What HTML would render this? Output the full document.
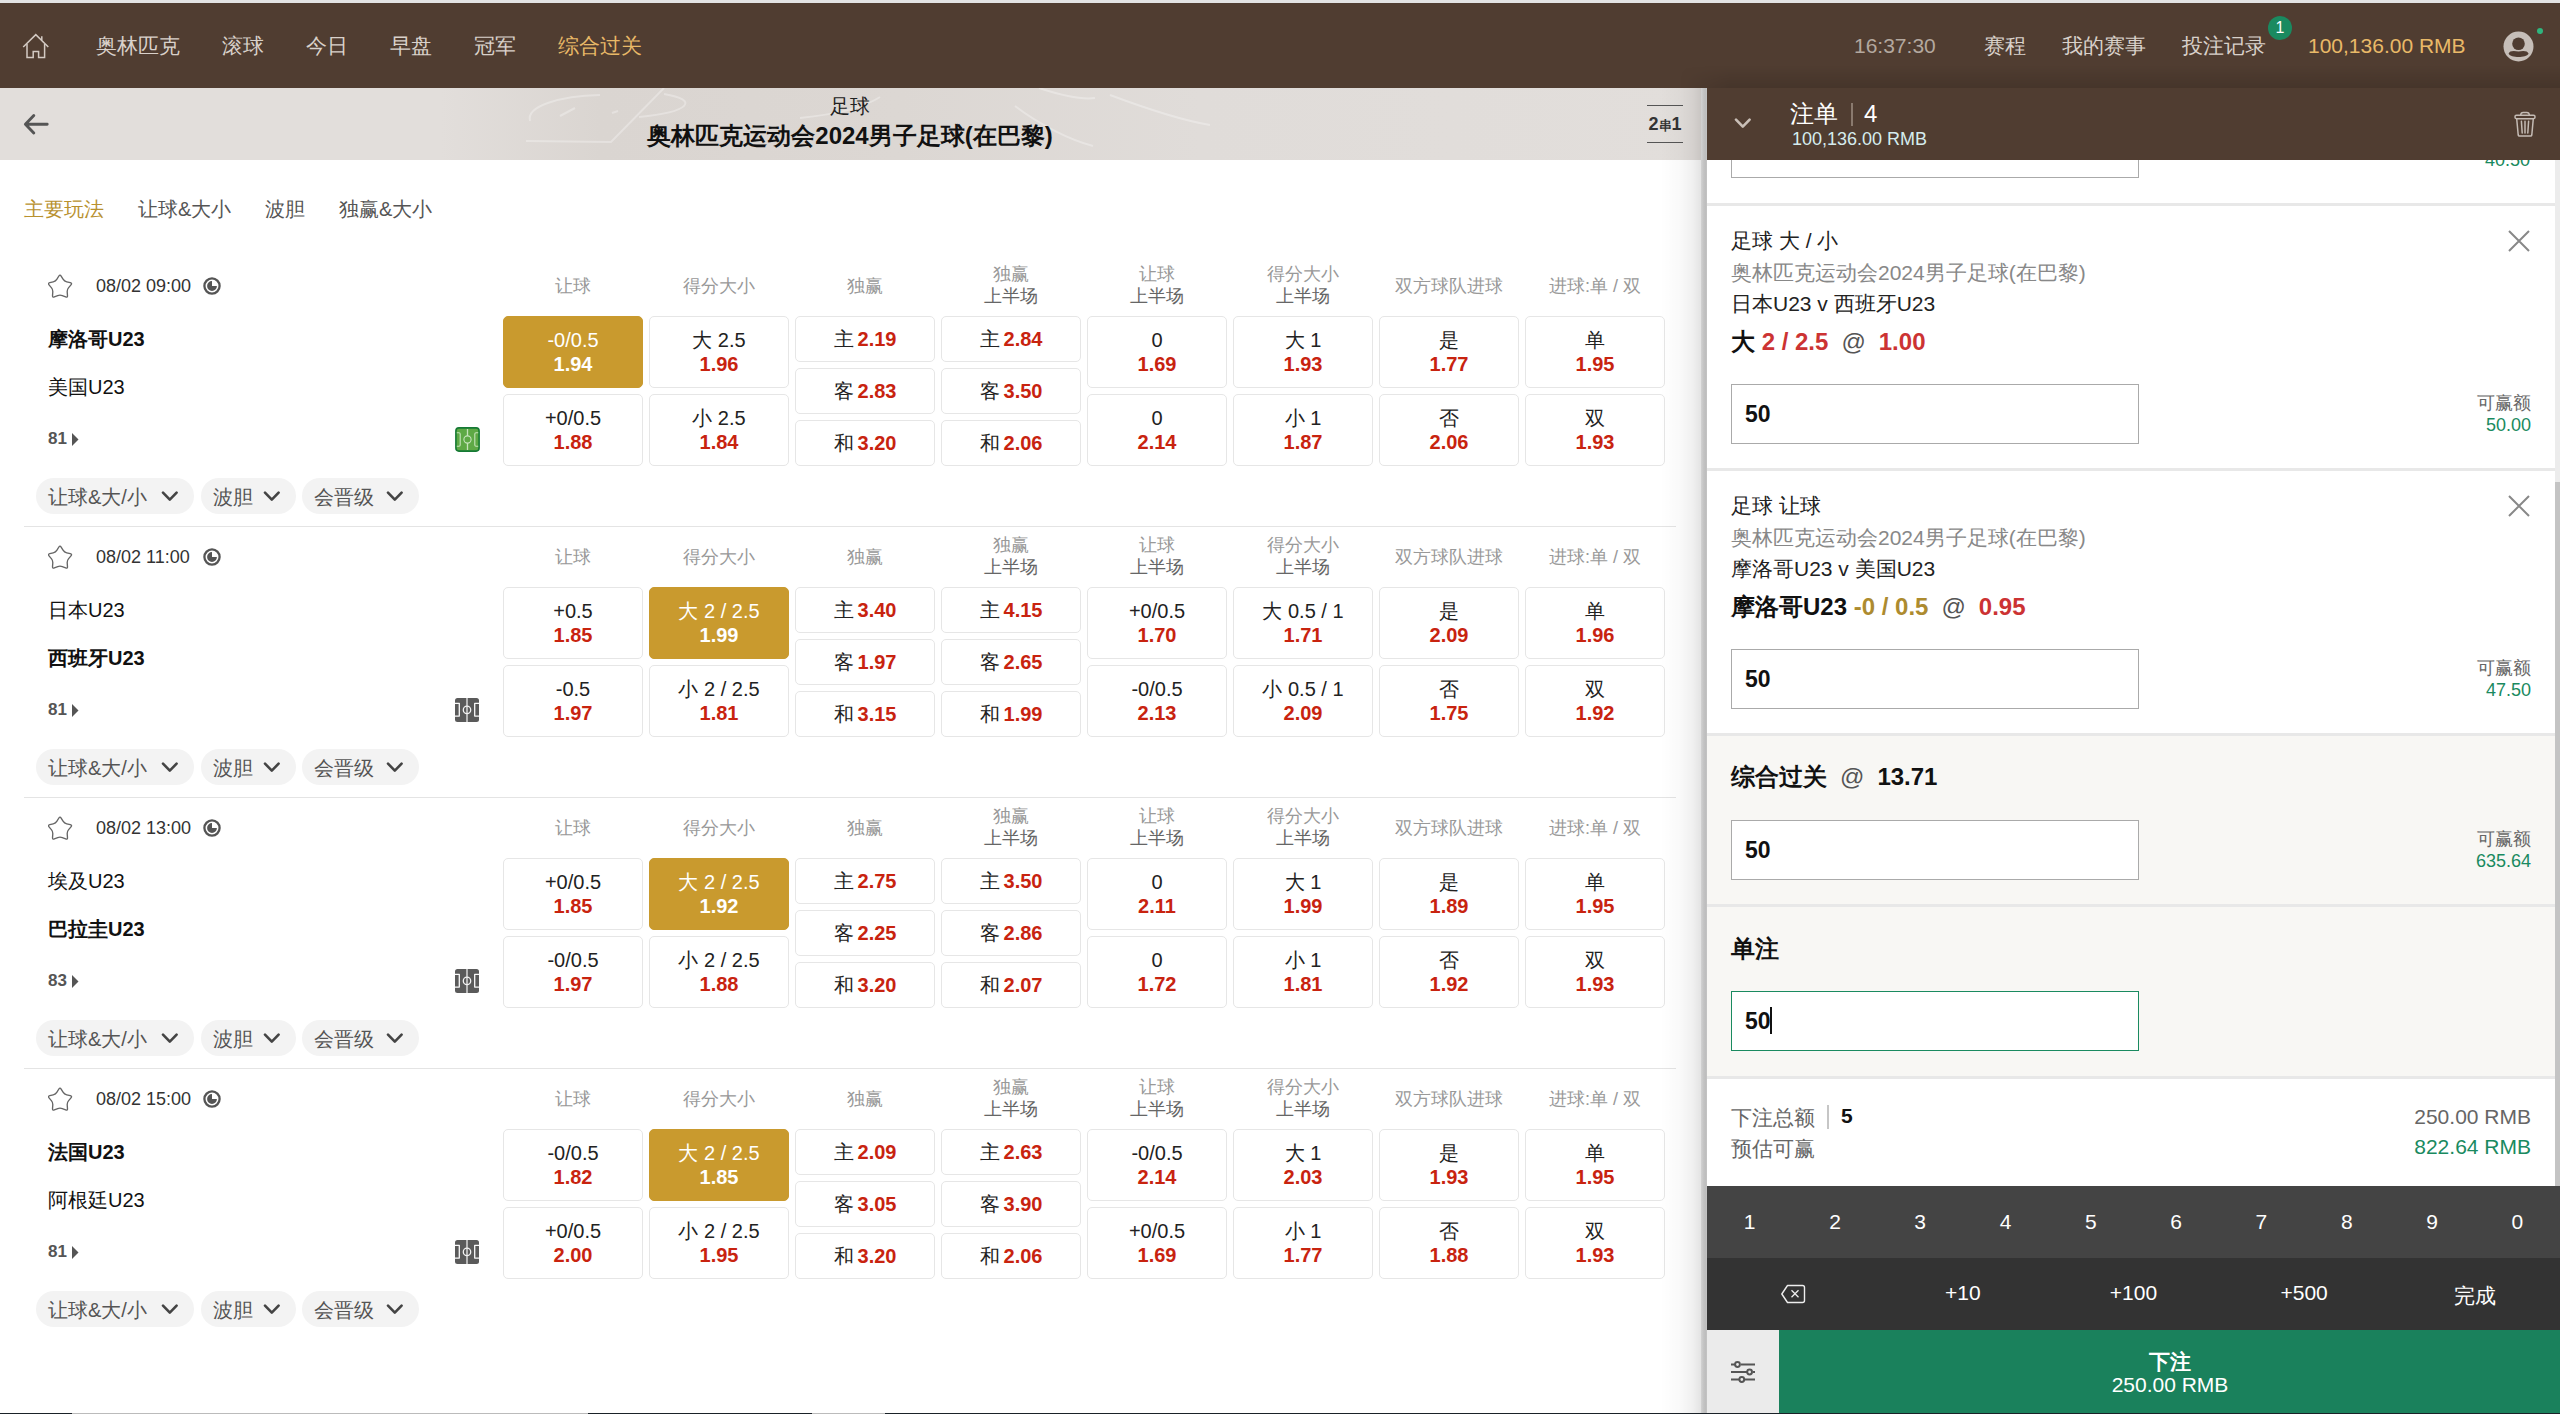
<!DOCTYPE html><html><head><meta charset="utf-8"><style>
*{box-sizing:border-box;margin:0;padding:0}
html,body{width:2560px;height:1414px;overflow:hidden;background:#fff;font-family:"Liberation Sans",sans-serif;color:#222}
.a{position:absolute;white-space:nowrap}
.nav{position:absolute;top:34px;font-size:21px;line-height:24px;color:#d9d1ca}
.colh{position:absolute;width:140px;text-align:center;font-size:18px;line-height:22px;color:#999}
.btn{position:absolute;width:140px;border:1px solid #e6e6e6;border-radius:5px;background:#fff;text-align:center;font-size:20px;color:#222}
.btn.sel{background:#c99a2e;border-color:#c99a2e;color:#fff}
.btn .o{color:#c8230f;font-weight:bold}
.btn.sel .o{color:#fff}
.pill{position:absolute;height:36px;border-radius:18px;background:#f3f3f3;font-size:20px;line-height:38px;color:#555;padding-left:12px}
.sep{position:absolute;left:24px;width:1652px;height:1px;background:#e4e4e4}
</style></head><body>
<div class="a" style="left:0;top:0;width:2560px;height:3px;background:#e3e3e3"></div>
<div class="a" style="left:0;top:3px;width:2560px;height:85px;background:#503d31"></div>
<svg class="a" style="left:22px;top:33px" width="28" height="27" viewBox="0 0 28 27"><path d="M1.2 14 L13.8 1.6 L26.3 14 M19.8 7.5 L19.8 3.2" fill="none" stroke="#d3cac3" stroke-width="1.5"/><path d="M5 11 V24.6 H11.2 V18.6 H16.6 V24.6 H22.6 V11" fill="none" stroke="#d3cac3" stroke-width="1.5"/></svg>
<div class="nav" style="left:96px;color:#d9d1ca">奥林匹克</div>
<div class="nav" style="left:222px;color:#d9d1ca">滚球</div>
<div class="nav" style="left:306px;color:#d9d1ca">今日</div>
<div class="nav" style="left:390px;color:#d9d1ca">早盘</div>
<div class="nav" style="left:474px;color:#d9d1ca">冠军</div>
<div class="nav" style="left:558px;color:#e9b968">综合过关</div>
<div class="nav" style="left:1854px;color:#b3a89f">16:37:30</div>
<div class="nav" style="left:1984px">赛程</div>
<div class="nav" style="left:2062px">我的赛事</div>
<div class="nav" style="left:2182px">投注记录</div>
<div class="a" style="left:2268px;top:16px;width:24px;height:24px;border-radius:12px;background:#1a8a60;color:#fff;font-size:16px;line-height:24px;text-align:center">1</div>
<div class="nav" style="left:2308px;color:#e9b968">100,136.00 RMB</div>
<svg class="a" style="left:2503px;top:31px" width="31" height="31" viewBox="0 0 31 31"><circle cx="15.5" cy="15.5" r="15" fill="#c6beb8"/><circle cx="15.5" cy="12.8" r="6.3" fill="#4f3c31"/><path d="M5.6 22.8 C6.5 19.5 11 19.6 15.5 20.6 C20 19.6 24.5 19.5 25.6 22.8 C23 27.2 8 27.2 5.6 22.8Z" fill="#4f3c31"/></svg>
<div class="a" style="left:2537px;top:28px;width:6px;height:6px;border-radius:3px;background:#2fb57e"></div>
<div class="a" style="left:0;top:88px;width:1707px;height:72px;background:linear-gradient(90deg,#e2dedb 0,#e2dedb 440px,#dad5d1 600px,#dcd7d3 900px,#e0dcd9 1200px,#e2dedb 1700px)"></div>
<svg class="a" style="left:0;top:88px;filter:blur(0.7px)" width="1700" height="72" viewBox="0 88 1700 72"><g fill="none" stroke="rgba(255,255,255,0.3)" stroke-width="2"><path d="M526 141 L611 142 L664 88"/><path d="M530 121 C526 106 560 96 600 95"/><path d="M639 117 C690 112 700 100 664 94"/><path d="M560 116 L575 108"/><path d="M612 113 L618 111"/><path d="M1015 106 C1040 125 1070 140 1093 146"/><path d="M1039 88 C1060 95 1080 100 1095 98"/><path d="M1110 95 C1150 110 1180 120 1210 125"/><path d="M880 97 C860 110 830 115 800 118"/></g></svg>
<svg class="a" style="left:23px;top:113px" width="27" height="23" viewBox="0 0 27 23"><path d="M10.8 2.6 L2.4 11.3 L10.8 20 M2.6 11.3 H24.2" fill="none" stroke="#555" stroke-width="2.9" stroke-linecap="round" stroke-linejoin="round"/></svg>
<div class="a" style="left:650px;top:95px;width:400px;text-align:center;font-size:20px;line-height:22px;color:#222">足球</div>
<div class="a" style="left:600px;top:123px;width:500px;text-align:center;font-size:24px;line-height:26px;font-weight:bold;color:#111">奥林匹克运动会2024男子足球(在巴黎)</div>
<div class="a" style="left:1647px;top:105px;width:36px;height:1px;background:#555"></div>
<div class="a" style="left:1647px;top:142px;width:36px;height:1px;background:#555"></div>
<div class="a" style="left:1647px;top:114px;width:36px;text-align:center;font-size:18px;line-height:20px;font-weight:bold;color:#333">2<span style="font-size:13px">串</span>1</div>
<div class="a" style="left:24px;top:197px;font-size:20px;line-height:24px;color:#b8912f">主要玩法</div>
<div class="a" style="left:138px;top:197px;font-size:20px;line-height:24px;color:#555">让球&amp;大小</div>
<div class="a" style="left:265px;top:197px;font-size:20px;line-height:24px;color:#555">波胆</div>
<div class="a" style="left:339px;top:197px;font-size:20px;line-height:24px;color:#555">独赢&amp;大小</div>
<svg class="a" style="left:48px;top:274px" width="26" height="26" viewBox="0 0 26 26"><path d="M10.87 2.02 Q12.00 0.20 13.13 2.02 L15.04 5.11 Q16.35 7.21 18.75 7.80 L22.28 8.67 Q24.36 9.18 22.98 10.82 L20.64 13.60 Q19.04 15.49 19.22 17.96 L19.48 21.58 Q19.64 23.72 17.65 22.91 L14.29 21.54 Q12.00 20.60 9.71 21.54 L6.35 22.91 Q4.36 23.72 4.52 21.58 L4.78 17.96 Q4.96 15.49 3.36 13.60 L1.02 10.82 Q-0.36 9.18 1.72 8.67 L5.25 7.80 Q7.65 7.21 8.96 5.11 Z" fill="none" stroke="#666" stroke-width="1.35" stroke-linejoin="round"/></svg>
<div class="a" style="left:96px;top:275px;font-size:18px;line-height:22px;color:#333">08/02 09:00</div>
<svg class="a" style="left:203px;top:277px" width="19" height="19" viewBox="0 0 19 19"><circle cx="9" cy="9" r="7.6" fill="none" stroke="#555" stroke-width="2.3"/><path d="M9 4.1 V9 H13.9 A4.9 4.9 0 1 1 9 4.1Z" fill="#555"/></svg>
<div class="colh" style="left:503px;top:275px">让球</div>
<div class="colh" style="left:649px;top:275px">得分大小</div>
<div class="colh" style="left:795px;top:275px">独赢</div>
<div class="colh" style="left:941px;top:263px">独赢<br><span style="color:#666">上半场</span></div>
<div class="colh" style="left:1087px;top:263px">让球<br><span style="color:#666">上半场</span></div>
<div class="colh" style="left:1233px;top:263px">得分大小<br><span style="color:#666">上半场</span></div>
<div class="colh" style="left:1379px;top:275px">双方球队进球</div>
<div class="colh" style="left:1525px;top:275px">进球:单 / 双</div>
<div class="a" style="left:48px;top:327px;font-size:20px;line-height:24px;font-weight:bold;color:#111">摩洛哥U23</div>
<div class="a" style="left:48px;top:375px;font-size:20px;line-height:24px;font-weight:normal;color:#111">美国U23</div>
<div class="a" style="left:48px;top:429px;font-size:17px;line-height:20px;font-weight:bold;color:#555">81</div>
<svg class="a" style="left:72px;top:433px" width="7" height="13" viewBox="0 0 7 13"><path d="M0 0 L6.5 6.5 L0 13Z" fill="#555"/></svg>
<svg class="a" style="left:455px;top:427px" width="25" height="25" viewBox="0 0 25 25"><rect x="0.9" y="0.9" width="23.2" height="23.2" rx="3" fill="#5ea945" stroke="#157a34" stroke-width="1.6"/><path d="M12.5 2 V23" stroke="#c5e3bb" stroke-width="1.3"/><circle cx="12.5" cy="12.5" r="3.6" fill="#5ea945" stroke="#c5e3bb" stroke-width="1.1"/><path d="M1.8 5.8 H4 Q5.2 5.8 5.2 7 V18 Q5.2 19.2 4 19.2 H1.8 M23.2 5.8 H21 Q19.8 5.8 19.8 7 V18 Q19.8 19.2 21 19.2 H23.2" fill="none" stroke="#c5e3bb" stroke-width="1.1"/></svg>
<div class="btn sel" style="left:503px;top:316px;height:72px;padding-top:11px;line-height:24px">-0/0.5<br><span class="o">1.94</span></div>
<div class="btn" style="left:503px;top:394px;height:72px;padding-top:11px;line-height:24px">+0/0.5<br><span class="o">1.88</span></div>
<div class="btn" style="left:649px;top:316px;height:72px;padding-top:11px;line-height:24px">大 2.5<br><span class="o">1.96</span></div>
<div class="btn" style="left:649px;top:394px;height:72px;padding-top:11px;line-height:24px">小 2.5<br><span class="o">1.84</span></div>
<div class="btn" style="left:795px;top:316px;height:46px;line-height:44px">主<span class="o" style="margin-left:4px">2.19</span></div>
<div class="btn" style="left:795px;top:368px;height:46px;line-height:44px">客<span class="o" style="margin-left:4px">2.83</span></div>
<div class="btn" style="left:795px;top:420px;height:46px;line-height:44px">和<span class="o" style="margin-left:4px">3.20</span></div>
<div class="btn" style="left:941px;top:316px;height:46px;line-height:44px">主<span class="o" style="margin-left:4px">2.84</span></div>
<div class="btn" style="left:941px;top:368px;height:46px;line-height:44px">客<span class="o" style="margin-left:4px">3.50</span></div>
<div class="btn" style="left:941px;top:420px;height:46px;line-height:44px">和<span class="o" style="margin-left:4px">2.06</span></div>
<div class="btn" style="left:1087px;top:316px;height:72px;padding-top:11px;line-height:24px">0<br><span class="o">1.69</span></div>
<div class="btn" style="left:1087px;top:394px;height:72px;padding-top:11px;line-height:24px">0<br><span class="o">2.14</span></div>
<div class="btn" style="left:1233px;top:316px;height:72px;padding-top:11px;line-height:24px">大 1<br><span class="o">1.93</span></div>
<div class="btn" style="left:1233px;top:394px;height:72px;padding-top:11px;line-height:24px">小 1<br><span class="o">1.87</span></div>
<div class="btn" style="left:1379px;top:316px;height:72px;padding-top:11px;line-height:24px">是<br><span class="o">1.77</span></div>
<div class="btn" style="left:1379px;top:394px;height:72px;padding-top:11px;line-height:24px">否<br><span class="o">2.06</span></div>
<div class="btn" style="left:1525px;top:316px;height:72px;padding-top:11px;line-height:24px">单<br><span class="o">1.95</span></div>
<div class="btn" style="left:1525px;top:394px;height:72px;padding-top:11px;line-height:24px">双<br><span class="o">1.93</span></div>
<div class="pill" style="left:36px;top:478px;width:158px">让球&amp;大/小</div>
<svg class="a" style="left:161px;top:491px" width="18" height="11" viewBox="0 0 18 11"><path d="M2 1.6 L8.8 8.6 L15.6 1.6" fill="none" stroke="#444" stroke-width="2.6" stroke-linecap="round" stroke-linejoin="round"/></svg>
<div class="pill" style="left:201px;top:478px;width:95px">波胆</div>
<svg class="a" style="left:263px;top:491px" width="18" height="11" viewBox="0 0 18 11"><path d="M2 1.6 L8.8 8.6 L15.6 1.6" fill="none" stroke="#444" stroke-width="2.6" stroke-linecap="round" stroke-linejoin="round"/></svg>
<div class="pill" style="left:302px;top:478px;width:117px">会晋级</div>
<svg class="a" style="left:386px;top:491px" width="18" height="11" viewBox="0 0 18 11"><path d="M2 1.6 L8.8 8.6 L15.6 1.6" fill="none" stroke="#444" stroke-width="2.6" stroke-linecap="round" stroke-linejoin="round"/></svg>
<div class="sep" style="top:526px"></div>
<svg class="a" style="left:48px;top:545px" width="26" height="26" viewBox="0 0 26 26"><path d="M10.87 2.02 Q12.00 0.20 13.13 2.02 L15.04 5.11 Q16.35 7.21 18.75 7.80 L22.28 8.67 Q24.36 9.18 22.98 10.82 L20.64 13.60 Q19.04 15.49 19.22 17.96 L19.48 21.58 Q19.64 23.72 17.65 22.91 L14.29 21.54 Q12.00 20.60 9.71 21.54 L6.35 22.91 Q4.36 23.72 4.52 21.58 L4.78 17.96 Q4.96 15.49 3.36 13.60 L1.02 10.82 Q-0.36 9.18 1.72 8.67 L5.25 7.80 Q7.65 7.21 8.96 5.11 Z" fill="none" stroke="#666" stroke-width="1.35" stroke-linejoin="round"/></svg>
<div class="a" style="left:96px;top:546px;font-size:18px;line-height:22px;color:#333">08/02 11:00</div>
<svg class="a" style="left:203px;top:548px" width="19" height="19" viewBox="0 0 19 19"><circle cx="9" cy="9" r="7.6" fill="none" stroke="#555" stroke-width="2.3"/><path d="M9 4.1 V9 H13.9 A4.9 4.9 0 1 1 9 4.1Z" fill="#555"/></svg>
<div class="colh" style="left:503px;top:546px">让球</div>
<div class="colh" style="left:649px;top:546px">得分大小</div>
<div class="colh" style="left:795px;top:546px">独赢</div>
<div class="colh" style="left:941px;top:534px">独赢<br><span style="color:#666">上半场</span></div>
<div class="colh" style="left:1087px;top:534px">让球<br><span style="color:#666">上半场</span></div>
<div class="colh" style="left:1233px;top:534px">得分大小<br><span style="color:#666">上半场</span></div>
<div class="colh" style="left:1379px;top:546px">双方球队进球</div>
<div class="colh" style="left:1525px;top:546px">进球:单 / 双</div>
<div class="a" style="left:48px;top:598px;font-size:20px;line-height:24px;font-weight:normal;color:#111">日本U23</div>
<div class="a" style="left:48px;top:646px;font-size:20px;line-height:24px;font-weight:bold;color:#111">西班牙U23</div>
<div class="a" style="left:48px;top:700px;font-size:17px;line-height:20px;font-weight:bold;color:#555">81</div>
<svg class="a" style="left:72px;top:704px" width="7" height="13" viewBox="0 0 7 13"><path d="M0 0 L6.5 6.5 L0 13Z" fill="#555"/></svg>
<svg class="a" style="left:455px;top:698px" width="25" height="25" viewBox="0 0 25 25"><rect x="0" y="0" width="24" height="24" rx="2.5" fill="#5a5a5a"/><path d="M12 0 V24" stroke="#bdbdbd" stroke-width="1.9"/><circle cx="12" cy="11.9" r="3.7" fill="none" stroke="#f2f2f2" stroke-width="1.3"/><path d="M0 5.3 H4.3 V18.1 H0 M24 5.3 H19.7 V18.1 H24" fill="none" stroke="#fafafa" stroke-width="1.3" stroke-linejoin="round"/></svg>
<div class="btn" style="left:503px;top:587px;height:72px;padding-top:11px;line-height:24px">+0.5<br><span class="o">1.85</span></div>
<div class="btn" style="left:503px;top:665px;height:72px;padding-top:11px;line-height:24px">-0.5<br><span class="o">1.97</span></div>
<div class="btn sel" style="left:649px;top:587px;height:72px;padding-top:11px;line-height:24px">大 2 / 2.5<br><span class="o">1.99</span></div>
<div class="btn" style="left:649px;top:665px;height:72px;padding-top:11px;line-height:24px">小 2 / 2.5<br><span class="o">1.81</span></div>
<div class="btn" style="left:795px;top:587px;height:46px;line-height:44px">主<span class="o" style="margin-left:4px">3.40</span></div>
<div class="btn" style="left:795px;top:639px;height:46px;line-height:44px">客<span class="o" style="margin-left:4px">1.97</span></div>
<div class="btn" style="left:795px;top:691px;height:46px;line-height:44px">和<span class="o" style="margin-left:4px">3.15</span></div>
<div class="btn" style="left:941px;top:587px;height:46px;line-height:44px">主<span class="o" style="margin-left:4px">4.15</span></div>
<div class="btn" style="left:941px;top:639px;height:46px;line-height:44px">客<span class="o" style="margin-left:4px">2.65</span></div>
<div class="btn" style="left:941px;top:691px;height:46px;line-height:44px">和<span class="o" style="margin-left:4px">1.99</span></div>
<div class="btn" style="left:1087px;top:587px;height:72px;padding-top:11px;line-height:24px">+0/0.5<br><span class="o">1.70</span></div>
<div class="btn" style="left:1087px;top:665px;height:72px;padding-top:11px;line-height:24px">-0/0.5<br><span class="o">2.13</span></div>
<div class="btn" style="left:1233px;top:587px;height:72px;padding-top:11px;line-height:24px">大 0.5 / 1<br><span class="o">1.71</span></div>
<div class="btn" style="left:1233px;top:665px;height:72px;padding-top:11px;line-height:24px">小 0.5 / 1<br><span class="o">2.09</span></div>
<div class="btn" style="left:1379px;top:587px;height:72px;padding-top:11px;line-height:24px">是<br><span class="o">2.09</span></div>
<div class="btn" style="left:1379px;top:665px;height:72px;padding-top:11px;line-height:24px">否<br><span class="o">1.75</span></div>
<div class="btn" style="left:1525px;top:587px;height:72px;padding-top:11px;line-height:24px">单<br><span class="o">1.96</span></div>
<div class="btn" style="left:1525px;top:665px;height:72px;padding-top:11px;line-height:24px">双<br><span class="o">1.92</span></div>
<div class="pill" style="left:36px;top:749px;width:158px">让球&amp;大/小</div>
<svg class="a" style="left:161px;top:762px" width="18" height="11" viewBox="0 0 18 11"><path d="M2 1.6 L8.8 8.6 L15.6 1.6" fill="none" stroke="#444" stroke-width="2.6" stroke-linecap="round" stroke-linejoin="round"/></svg>
<div class="pill" style="left:201px;top:749px;width:95px">波胆</div>
<svg class="a" style="left:263px;top:762px" width="18" height="11" viewBox="0 0 18 11"><path d="M2 1.6 L8.8 8.6 L15.6 1.6" fill="none" stroke="#444" stroke-width="2.6" stroke-linecap="round" stroke-linejoin="round"/></svg>
<div class="pill" style="left:302px;top:749px;width:117px">会晋级</div>
<svg class="a" style="left:386px;top:762px" width="18" height="11" viewBox="0 0 18 11"><path d="M2 1.6 L8.8 8.6 L15.6 1.6" fill="none" stroke="#444" stroke-width="2.6" stroke-linecap="round" stroke-linejoin="round"/></svg>
<div class="sep" style="top:797px"></div>
<svg class="a" style="left:48px;top:816px" width="26" height="26" viewBox="0 0 26 26"><path d="M10.87 2.02 Q12.00 0.20 13.13 2.02 L15.04 5.11 Q16.35 7.21 18.75 7.80 L22.28 8.67 Q24.36 9.18 22.98 10.82 L20.64 13.60 Q19.04 15.49 19.22 17.96 L19.48 21.58 Q19.64 23.72 17.65 22.91 L14.29 21.54 Q12.00 20.60 9.71 21.54 L6.35 22.91 Q4.36 23.72 4.52 21.58 L4.78 17.96 Q4.96 15.49 3.36 13.60 L1.02 10.82 Q-0.36 9.18 1.72 8.67 L5.25 7.80 Q7.65 7.21 8.96 5.11 Z" fill="none" stroke="#666" stroke-width="1.35" stroke-linejoin="round"/></svg>
<div class="a" style="left:96px;top:817px;font-size:18px;line-height:22px;color:#333">08/02 13:00</div>
<svg class="a" style="left:203px;top:819px" width="19" height="19" viewBox="0 0 19 19"><circle cx="9" cy="9" r="7.6" fill="none" stroke="#555" stroke-width="2.3"/><path d="M9 4.1 V9 H13.9 A4.9 4.9 0 1 1 9 4.1Z" fill="#555"/></svg>
<div class="colh" style="left:503px;top:817px">让球</div>
<div class="colh" style="left:649px;top:817px">得分大小</div>
<div class="colh" style="left:795px;top:817px">独赢</div>
<div class="colh" style="left:941px;top:805px">独赢<br><span style="color:#666">上半场</span></div>
<div class="colh" style="left:1087px;top:805px">让球<br><span style="color:#666">上半场</span></div>
<div class="colh" style="left:1233px;top:805px">得分大小<br><span style="color:#666">上半场</span></div>
<div class="colh" style="left:1379px;top:817px">双方球队进球</div>
<div class="colh" style="left:1525px;top:817px">进球:单 / 双</div>
<div class="a" style="left:48px;top:869px;font-size:20px;line-height:24px;font-weight:normal;color:#111">埃及U23</div>
<div class="a" style="left:48px;top:917px;font-size:20px;line-height:24px;font-weight:bold;color:#111">巴拉圭U23</div>
<div class="a" style="left:48px;top:971px;font-size:17px;line-height:20px;font-weight:bold;color:#555">83</div>
<svg class="a" style="left:72px;top:975px" width="7" height="13" viewBox="0 0 7 13"><path d="M0 0 L6.5 6.5 L0 13Z" fill="#555"/></svg>
<svg class="a" style="left:455px;top:969px" width="25" height="25" viewBox="0 0 25 25"><rect x="0" y="0" width="24" height="24" rx="2.5" fill="#5a5a5a"/><path d="M12 0 V24" stroke="#bdbdbd" stroke-width="1.9"/><circle cx="12" cy="11.9" r="3.7" fill="none" stroke="#f2f2f2" stroke-width="1.3"/><path d="M0 5.3 H4.3 V18.1 H0 M24 5.3 H19.7 V18.1 H24" fill="none" stroke="#fafafa" stroke-width="1.3" stroke-linejoin="round"/></svg>
<div class="btn" style="left:503px;top:858px;height:72px;padding-top:11px;line-height:24px">+0/0.5<br><span class="o">1.85</span></div>
<div class="btn" style="left:503px;top:936px;height:72px;padding-top:11px;line-height:24px">-0/0.5<br><span class="o">1.97</span></div>
<div class="btn sel" style="left:649px;top:858px;height:72px;padding-top:11px;line-height:24px">大 2 / 2.5<br><span class="o">1.92</span></div>
<div class="btn" style="left:649px;top:936px;height:72px;padding-top:11px;line-height:24px">小 2 / 2.5<br><span class="o">1.88</span></div>
<div class="btn" style="left:795px;top:858px;height:46px;line-height:44px">主<span class="o" style="margin-left:4px">2.75</span></div>
<div class="btn" style="left:795px;top:910px;height:46px;line-height:44px">客<span class="o" style="margin-left:4px">2.25</span></div>
<div class="btn" style="left:795px;top:962px;height:46px;line-height:44px">和<span class="o" style="margin-left:4px">3.20</span></div>
<div class="btn" style="left:941px;top:858px;height:46px;line-height:44px">主<span class="o" style="margin-left:4px">3.50</span></div>
<div class="btn" style="left:941px;top:910px;height:46px;line-height:44px">客<span class="o" style="margin-left:4px">2.86</span></div>
<div class="btn" style="left:941px;top:962px;height:46px;line-height:44px">和<span class="o" style="margin-left:4px">2.07</span></div>
<div class="btn" style="left:1087px;top:858px;height:72px;padding-top:11px;line-height:24px">0<br><span class="o">2.11</span></div>
<div class="btn" style="left:1087px;top:936px;height:72px;padding-top:11px;line-height:24px">0<br><span class="o">1.72</span></div>
<div class="btn" style="left:1233px;top:858px;height:72px;padding-top:11px;line-height:24px">大 1<br><span class="o">1.99</span></div>
<div class="btn" style="left:1233px;top:936px;height:72px;padding-top:11px;line-height:24px">小 1<br><span class="o">1.81</span></div>
<div class="btn" style="left:1379px;top:858px;height:72px;padding-top:11px;line-height:24px">是<br><span class="o">1.89</span></div>
<div class="btn" style="left:1379px;top:936px;height:72px;padding-top:11px;line-height:24px">否<br><span class="o">1.92</span></div>
<div class="btn" style="left:1525px;top:858px;height:72px;padding-top:11px;line-height:24px">单<br><span class="o">1.95</span></div>
<div class="btn" style="left:1525px;top:936px;height:72px;padding-top:11px;line-height:24px">双<br><span class="o">1.93</span></div>
<div class="pill" style="left:36px;top:1020px;width:158px">让球&amp;大/小</div>
<svg class="a" style="left:161px;top:1033px" width="18" height="11" viewBox="0 0 18 11"><path d="M2 1.6 L8.8 8.6 L15.6 1.6" fill="none" stroke="#444" stroke-width="2.6" stroke-linecap="round" stroke-linejoin="round"/></svg>
<div class="pill" style="left:201px;top:1020px;width:95px">波胆</div>
<svg class="a" style="left:263px;top:1033px" width="18" height="11" viewBox="0 0 18 11"><path d="M2 1.6 L8.8 8.6 L15.6 1.6" fill="none" stroke="#444" stroke-width="2.6" stroke-linecap="round" stroke-linejoin="round"/></svg>
<div class="pill" style="left:302px;top:1020px;width:117px">会晋级</div>
<svg class="a" style="left:386px;top:1033px" width="18" height="11" viewBox="0 0 18 11"><path d="M2 1.6 L8.8 8.6 L15.6 1.6" fill="none" stroke="#444" stroke-width="2.6" stroke-linecap="round" stroke-linejoin="round"/></svg>
<div class="sep" style="top:1068px"></div>
<svg class="a" style="left:48px;top:1087px" width="26" height="26" viewBox="0 0 26 26"><path d="M10.87 2.02 Q12.00 0.20 13.13 2.02 L15.04 5.11 Q16.35 7.21 18.75 7.80 L22.28 8.67 Q24.36 9.18 22.98 10.82 L20.64 13.60 Q19.04 15.49 19.22 17.96 L19.48 21.58 Q19.64 23.72 17.65 22.91 L14.29 21.54 Q12.00 20.60 9.71 21.54 L6.35 22.91 Q4.36 23.72 4.52 21.58 L4.78 17.96 Q4.96 15.49 3.36 13.60 L1.02 10.82 Q-0.36 9.18 1.72 8.67 L5.25 7.80 Q7.65 7.21 8.96 5.11 Z" fill="none" stroke="#666" stroke-width="1.35" stroke-linejoin="round"/></svg>
<div class="a" style="left:96px;top:1088px;font-size:18px;line-height:22px;color:#333">08/02 15:00</div>
<svg class="a" style="left:203px;top:1090px" width="19" height="19" viewBox="0 0 19 19"><circle cx="9" cy="9" r="7.6" fill="none" stroke="#555" stroke-width="2.3"/><path d="M9 4.1 V9 H13.9 A4.9 4.9 0 1 1 9 4.1Z" fill="#555"/></svg>
<div class="colh" style="left:503px;top:1088px">让球</div>
<div class="colh" style="left:649px;top:1088px">得分大小</div>
<div class="colh" style="left:795px;top:1088px">独赢</div>
<div class="colh" style="left:941px;top:1076px">独赢<br><span style="color:#666">上半场</span></div>
<div class="colh" style="left:1087px;top:1076px">让球<br><span style="color:#666">上半场</span></div>
<div class="colh" style="left:1233px;top:1076px">得分大小<br><span style="color:#666">上半场</span></div>
<div class="colh" style="left:1379px;top:1088px">双方球队进球</div>
<div class="colh" style="left:1525px;top:1088px">进球:单 / 双</div>
<div class="a" style="left:48px;top:1140px;font-size:20px;line-height:24px;font-weight:bold;color:#111">法国U23</div>
<div class="a" style="left:48px;top:1188px;font-size:20px;line-height:24px;font-weight:normal;color:#111">阿根廷U23</div>
<div class="a" style="left:48px;top:1242px;font-size:17px;line-height:20px;font-weight:bold;color:#555">81</div>
<svg class="a" style="left:72px;top:1246px" width="7" height="13" viewBox="0 0 7 13"><path d="M0 0 L6.5 6.5 L0 13Z" fill="#555"/></svg>
<svg class="a" style="left:455px;top:1240px" width="25" height="25" viewBox="0 0 25 25"><rect x="0" y="0" width="24" height="24" rx="2.5" fill="#5a5a5a"/><path d="M12 0 V24" stroke="#bdbdbd" stroke-width="1.9"/><circle cx="12" cy="11.9" r="3.7" fill="none" stroke="#f2f2f2" stroke-width="1.3"/><path d="M0 5.3 H4.3 V18.1 H0 M24 5.3 H19.7 V18.1 H24" fill="none" stroke="#fafafa" stroke-width="1.3" stroke-linejoin="round"/></svg>
<div class="btn" style="left:503px;top:1129px;height:72px;padding-top:11px;line-height:24px">-0/0.5<br><span class="o">1.82</span></div>
<div class="btn" style="left:503px;top:1207px;height:72px;padding-top:11px;line-height:24px">+0/0.5<br><span class="o">2.00</span></div>
<div class="btn sel" style="left:649px;top:1129px;height:72px;padding-top:11px;line-height:24px">大 2 / 2.5<br><span class="o">1.85</span></div>
<div class="btn" style="left:649px;top:1207px;height:72px;padding-top:11px;line-height:24px">小 2 / 2.5<br><span class="o">1.95</span></div>
<div class="btn" style="left:795px;top:1129px;height:46px;line-height:44px">主<span class="o" style="margin-left:4px">2.09</span></div>
<div class="btn" style="left:795px;top:1181px;height:46px;line-height:44px">客<span class="o" style="margin-left:4px">3.05</span></div>
<div class="btn" style="left:795px;top:1233px;height:46px;line-height:44px">和<span class="o" style="margin-left:4px">3.20</span></div>
<div class="btn" style="left:941px;top:1129px;height:46px;line-height:44px">主<span class="o" style="margin-left:4px">2.63</span></div>
<div class="btn" style="left:941px;top:1181px;height:46px;line-height:44px">客<span class="o" style="margin-left:4px">3.90</span></div>
<div class="btn" style="left:941px;top:1233px;height:46px;line-height:44px">和<span class="o" style="margin-left:4px">2.06</span></div>
<div class="btn" style="left:1087px;top:1129px;height:72px;padding-top:11px;line-height:24px">-0/0.5<br><span class="o">2.14</span></div>
<div class="btn" style="left:1087px;top:1207px;height:72px;padding-top:11px;line-height:24px">+0/0.5<br><span class="o">1.69</span></div>
<div class="btn" style="left:1233px;top:1129px;height:72px;padding-top:11px;line-height:24px">大 1<br><span class="o">2.03</span></div>
<div class="btn" style="left:1233px;top:1207px;height:72px;padding-top:11px;line-height:24px">小 1<br><span class="o">1.77</span></div>
<div class="btn" style="left:1379px;top:1129px;height:72px;padding-top:11px;line-height:24px">是<br><span class="o">1.93</span></div>
<div class="btn" style="left:1379px;top:1207px;height:72px;padding-top:11px;line-height:24px">否<br><span class="o">1.88</span></div>
<div class="btn" style="left:1525px;top:1129px;height:72px;padding-top:11px;line-height:24px">单<br><span class="o">1.95</span></div>
<div class="btn" style="left:1525px;top:1207px;height:72px;padding-top:11px;line-height:24px">双<br><span class="o">1.93</span></div>
<div class="pill" style="left:36px;top:1291px;width:158px">让球&amp;大/小</div>
<svg class="a" style="left:161px;top:1304px" width="18" height="11" viewBox="0 0 18 11"><path d="M2 1.6 L8.8 8.6 L15.6 1.6" fill="none" stroke="#444" stroke-width="2.6" stroke-linecap="round" stroke-linejoin="round"/></svg>
<div class="pill" style="left:201px;top:1291px;width:95px">波胆</div>
<svg class="a" style="left:263px;top:1304px" width="18" height="11" viewBox="0 0 18 11"><path d="M2 1.6 L8.8 8.6 L15.6 1.6" fill="none" stroke="#444" stroke-width="2.6" stroke-linecap="round" stroke-linejoin="round"/></svg>
<div class="pill" style="left:302px;top:1291px;width:117px">会晋级</div>
<svg class="a" style="left:386px;top:1304px" width="18" height="11" viewBox="0 0 18 11"><path d="M2 1.6 L8.8 8.6 L15.6 1.6" fill="none" stroke="#444" stroke-width="2.6" stroke-linecap="round" stroke-linejoin="round"/></svg>
<div class="a" style="left:1660px;top:88px;width:41px;height:1326px;background:linear-gradient(90deg,rgba(0,0,0,0) 0%,rgba(0,0,0,0.025) 50%,rgba(0,0,0,0.06) 80%,rgba(0,0,0,0.11) 100%)"></div>
<div class="a" style="left:1701px;top:88px;width:6px;height:1326px;background:linear-gradient(90deg,#d2d2d2,#c3c3c3 45%,#bdbdbd 80%,#c6c6c6)"></div>
<div class="a" style="left:1707px;top:160px;width:853px;height:1254px;background:#fff"></div>
<div class="a" style="left:1731px;top:120px;width:408px;height:58px;border:1px solid #aaa"></div>
<div class="a" style="left:2430px;top:149px;width:100px;text-align:right;font-size:18px;line-height:22px;color:#1a8a60">40.50</div>
<div class="a" style="left:1707px;top:203px;width:848px;height:3px;background:#e8e8e8"></div>
<div class="a" style="left:1731px;top:229px;font-size:21px;line-height:24px;color:#222">足球 大 / 小</div><svg class="a" style="left:2507px;top:229px" width="24" height="24" viewBox="0 0 24 24"><path d="M2 2 L22 22 M22 2 L2 22" stroke="#888" stroke-width="2"/></svg><div class="a" style="left:1731px;top:261px;font-size:21px;line-height:24px;color:#888">奥林匹克运动会2024男子足球(在巴黎)</div><div class="a" style="left:1731px;top:292px;font-size:21px;line-height:24px;color:#222">日本U23 v 西班牙U23</div><div class="a" style="left:1731px;top:328px;font-size:24px;line-height:28px;font-weight:bold;color:#111">大 <span style="color:#cc3333">2 / 2.5</span><span style="font-weight:normal;color:#555;margin:0 13px 0 13px">@</span><span style="color:#cc3333">1.00</span></div><div class="a" style="left:1731px;top:384px;width:408px;height:60px;border:1px solid #aaa;background:#fff"></div><div class="a" style="left:1745px;top:401px;font-size:23px;line-height:26px;font-weight:bold;color:#111">50</div><div class="a" style="left:2331px;top:393px;width:200px;text-align:right;font-size:18px;line-height:21px;color:#666">可赢额</div><div class="a" style="left:2331px;top:415px;width:200px;text-align:right;font-size:18px;line-height:21px;color:#1a8a60">50.00</div>
<div class="a" style="left:1707px;top:468px;width:848px;height:3px;background:#e8e8e8"></div>
<div class="a" style="left:1731px;top:494px;font-size:21px;line-height:24px;color:#222">足球 让球</div><svg class="a" style="left:2507px;top:494px" width="24" height="24" viewBox="0 0 24 24"><path d="M2 2 L22 22 M22 2 L2 22" stroke="#888" stroke-width="2"/></svg><div class="a" style="left:1731px;top:526px;font-size:21px;line-height:24px;color:#888">奥林匹克运动会2024男子足球(在巴黎)</div><div class="a" style="left:1731px;top:557px;font-size:21px;line-height:24px;color:#222">摩洛哥U23 v 美国U23</div><div class="a" style="left:1731px;top:593px;font-size:24px;line-height:28px;font-weight:bold;color:#111">摩洛哥U23 <span style="color:#ad8b2f">-0 / 0.5</span><span style="font-weight:normal;color:#555;margin:0 13px 0 13px">@</span><span style="color:#cc3333">0.95</span></div><div class="a" style="left:1731px;top:649px;width:408px;height:60px;border:1px solid #aaa;background:#fff"></div><div class="a" style="left:1745px;top:666px;font-size:23px;line-height:26px;font-weight:bold;color:#111">50</div><div class="a" style="left:2331px;top:658px;width:200px;text-align:right;font-size:18px;line-height:21px;color:#666">可赢额</div><div class="a" style="left:2331px;top:680px;width:200px;text-align:right;font-size:18px;line-height:21px;color:#1a8a60">47.50</div>
<div class="a" style="left:1707px;top:733px;width:848px;height:3px;background:#e8e8e8"></div>
<div class="a" style="left:1707px;top:736px;width:848px;height:168px;background:#f8f7f4"></div>
<div class="a" style="left:1731px;top:763px;font-size:24px;line-height:28px;font-weight:bold;color:#111">综合过关<span style="font-weight:normal;color:#555;margin:0 13px 0 13px">@</span>13.71</div>
<div class="a" style="left:1731px;top:820px;width:408px;height:60px;border:1px solid #aaa;background:#fff"></div>
<div class="a" style="left:1745px;top:837px;font-size:23px;line-height:26px;font-weight:bold;color:#111">50</div>
<div class="a" style="left:2331px;top:829px;width:200px;text-align:right;font-size:18px;line-height:21px;color:#666">可赢额</div>
<div class="a" style="left:2331px;top:851px;width:200px;text-align:right;font-size:18px;line-height:21px;color:#1a8a60">635.64</div>
<div class="a" style="left:1707px;top:904px;width:848px;height:3px;background:#e8e8e8"></div>
<div class="a" style="left:1707px;top:907px;width:848px;height:169px;background:#f8f7f4"></div>
<div class="a" style="left:1731px;top:935px;font-size:24px;line-height:28px;font-weight:bold;color:#111">单注</div>
<div class="a" style="left:1731px;top:991px;width:408px;height:60px;border:1px solid #1a8a60;background:#fff"></div>
<div class="a" style="left:1745px;top:1008px;font-size:23px;line-height:26px;font-weight:bold;color:#111">50</div>
<div class="a" style="left:1770px;top:1007px;width:2px;height:27px;background:#111"></div>
<div class="a" style="left:1707px;top:1076px;width:848px;height:3px;background:#e8e8e8"></div>
<div class="a" style="left:1731px;top:1106px;font-size:21px;line-height:24px;color:#666">下注总额</div>
<div class="a" style="left:1827px;top:1105px;width:2px;height:24px;background:#c6c6c6"></div>
<div class="a" style="left:1841px;top:1104px;font-size:21px;line-height:24px;font-weight:bold;color:#111">5</div>
<div class="a" style="left:1731px;top:1137px;font-size:21px;line-height:24px;color:#666">预估可赢</div>
<div class="a" style="left:2231px;top:1105px;width:300px;text-align:right;font-size:21px;line-height:24px;color:#666">250.00 RMB</div>
<div class="a" style="left:2231px;top:1135px;width:300px;text-align:right;font-size:21px;line-height:24px;color:#1a8a60">822.64 RMB</div>
<div class="a" style="left:1707px;top:1186px;width:853px;height:72px;background:#444"></div>
<div class="a" style="left:1707px;top:1258px;width:853px;height:72px;background:#333"></div>
<div class="a" style="left:1719.7px;top:1210px;width:60px;text-align:center;font-size:21px;line-height:24px;color:#fff">1</div>
<div class="a" style="left:1805.0px;top:1210px;width:60px;text-align:center;font-size:21px;line-height:24px;color:#fff">2</div>
<div class="a" style="left:1890.2px;top:1210px;width:60px;text-align:center;font-size:21px;line-height:24px;color:#fff">3</div>
<div class="a" style="left:1975.5px;top:1210px;width:60px;text-align:center;font-size:21px;line-height:24px;color:#fff">4</div>
<div class="a" style="left:2060.8px;top:1210px;width:60px;text-align:center;font-size:21px;line-height:24px;color:#fff">5</div>
<div class="a" style="left:2146.2px;top:1210px;width:60px;text-align:center;font-size:21px;line-height:24px;color:#fff">6</div>
<div class="a" style="left:2231.4px;top:1210px;width:60px;text-align:center;font-size:21px;line-height:24px;color:#fff">7</div>
<div class="a" style="left:2316.8px;top:1210px;width:60px;text-align:center;font-size:21px;line-height:24px;color:#fff">8</div>
<div class="a" style="left:2402.1px;top:1210px;width:60px;text-align:center;font-size:21px;line-height:24px;color:#fff">9</div>
<div class="a" style="left:2487.3px;top:1210px;width:60px;text-align:center;font-size:21px;line-height:24px;color:#fff">0</div>
<svg class="a" style="left:1780.3px;top:1284px" width="26" height="20" viewBox="0 0 26 20"><path d="M7.5 1.5 H22.5 Q24.5 1.5 24.5 3.5 V16.5 Q24.5 18.5 22.5 18.5 H7.5 L1.8 10 Z" fill="none" stroke="#eee" stroke-width="1.4" stroke-linejoin="round"/><path d="M11.5 6.2 L18.5 13.2 M18.5 6.2 L11.5 13.2" stroke="#eee" stroke-width="1.3"/></svg>
<div class="a" style="left:1902.9px;top:1281px;width:120px;text-align:center;font-size:21px;line-height:24px;color:#fff">+10</div>
<div class="a" style="left:2073.5px;top:1281px;width:120px;text-align:center;font-size:21px;line-height:24px;color:#fff">+100</div>
<div class="a" style="left:2244.1px;top:1281px;width:120px;text-align:center;font-size:21px;line-height:24px;color:#fff">+500</div>
<div class="a" style="left:2414.7px;top:1284px;width:120px;text-align:center;font-size:21px;line-height:24px;color:#fff">完成</div>
<div class="a" style="left:1707px;top:1330px;width:72px;height:84px;background:#ebebeb"></div>
<svg class="a" style="left:1730px;top:1361px" width="26" height="24" viewBox="0 0 26 24"><g stroke="#555" stroke-width="2" fill="none"><path d="M1 3.5 H5 M11 3.5 H25"/><circle cx="7.5" cy="3.5" r="2.4"/><path d="M1 11 H17 M23 11 H25"/><circle cx="19.6" cy="11" r="2.4"/><path d="M1 18.5 H9 M15 18.5 H25"/><circle cx="11.8" cy="18.5" r="2.4"/></g></svg>
<div class="a" style="left:1779px;top:1330px;width:781px;height:84px;background:#1a815c"></div>
<div class="a" style="left:1970px;top:1350px;width:400px;text-align:center;font-size:21px;line-height:24px;font-weight:bold;color:#fff">下注</div>
<div class="a" style="left:1970px;top:1373px;width:400px;text-align:center;font-size:21px;line-height:24px;color:#fff">250.00 RMB</div>
<div class="a" style="left:2555px;top:160px;width:5px;height:1026px;background:#ececec"></div>
<div class="a" style="left:2555px;top:482px;width:5px;height:704px;background:#c4c4c4"></div>
<div class="a" style="left:1707px;top:88px;width:853px;height:72px;background:#503d31"></div>
<svg class="a" style="left:1734px;top:118px" width="18" height="11" viewBox="0 0 18 11"><path d="M2 1.6 L8.8 8.6 L15.6 1.6" fill="none" stroke="#c9bfb7" stroke-width="2.6" stroke-linecap="round" stroke-linejoin="round"/></svg>
<div class="a" style="left:1790px;top:100px;font-size:24px;line-height:27px;color:#fff">注单</div>
<div class="a" style="left:1851px;top:103px;width:2px;height:23px;background:#8a7a6e"></div>
<div class="a" style="left:1864px;top:100px;font-size:24px;line-height:27px;color:#fff">4</div>
<div class="a" style="left:1792px;top:129px;font-size:18px;line-height:20px;color:#d5ecee">100,136.00 RMB</div>
<svg class="a" style="left:2513px;top:110px" width="24" height="27" viewBox="0 0 24 27"><g fill="none" stroke="#c4bbb4" stroke-width="1.5" stroke-linejoin="round" stroke-linecap="round"><rect x="2" y="5.3" width="20" height="3.4" rx="1.4"/><path d="M7.6 5.2 Q7.8 2.5 10.2 2.5 H13.8 Q16.2 2.5 16.4 5.2"/><path d="M3.7 8.8 L5.2 25 Q5.4 26 6.4 26 H17.6 Q18.6 26 18.8 25 L20.3 8.8"/><path d="M8.4 11.3 L9.2 23 M12 11.3 V23 M15.6 11.3 L14.8 23"/></g></svg>
<div class="a" style="left:1680px;top:66px;width:880px;height:22px;background:linear-gradient(rgba(0,0,0,0),rgba(0,0,0,0.13));-webkit-mask-image:linear-gradient(90deg,transparent 0,#000 50px)"></div>
<div class="a" style="left:0;top:1413px;width:72px;height:1px;background:#1a2228"></div>
<div class="a" style="left:72px;top:1413px;width:516px;height:1px;background:#bbb"></div><div class="a" style="left:588px;top:1413px;width:224px;height:1px;background:#1a2228"></div><div class="a" style="left:812px;top:1413px;width:73px;height:1px;background:#bbb"></div><div class="a" style="left:885px;top:1413px;width:1675px;height:1px;background:#1a2228"></div>
</body></html>
